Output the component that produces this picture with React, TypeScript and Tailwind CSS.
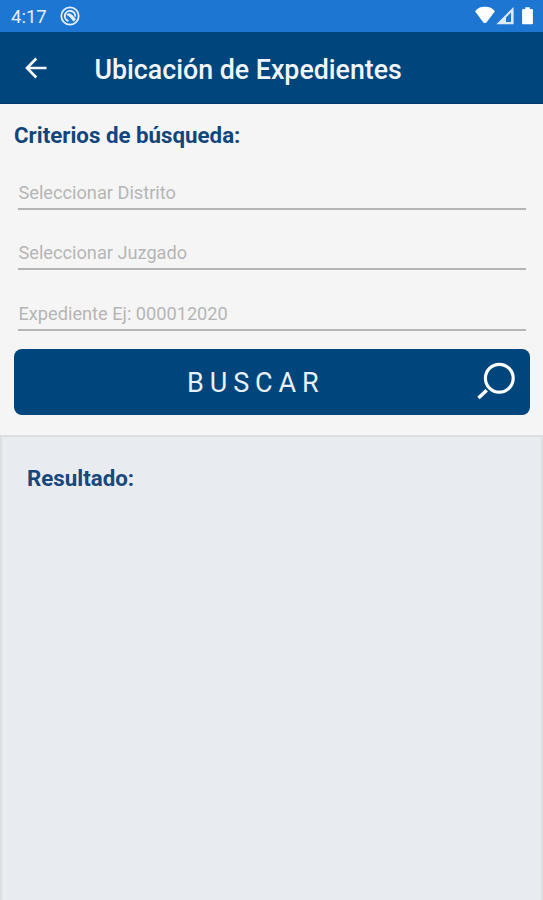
const StatusBar = () => {
  return (
    <div className="flex h-8 items-center justify-between bg-[#1e76d3] pl-[11px] pr-[8px] text-white">
      <div className="flex items-center gap-[13px]">
        <span className="pt-px text-[18.5px] leading-8 text-[#e6effb]">4:17</span>
        <svg width="20" height="20" viewBox="0 0 20 20" fill="none" stroke="#e6effb">
          <circle cx="10" cy="10" r="8.7" strokeWidth="1.8" />
          <path d="M8.4 15A5.2 5.2 0 1 1 15.2 10.6" strokeWidth="1.9" />
          <path d="M6.8 8.4c2.6-1.4 5-.2 8.6 4.8l-1.8 2c-2.2-3.2-3.8-4.8-6.8-6.8Z" fill="#e6effb" />
        </svg>
      </div>
      <svg width="60" height="20" viewBox="0 0 60 20" fill="white">
        {/* wifi */}
        <path d="M.2 5.4C2 2 6 .8 9.9.8s8 1.2 9.9 4.6L11.6 16.2q-1.7 1.7-3.4 0Z" />
        {/* signal */}
        <path fillRule="evenodd" d="M21.4 18.2 38.6 1v17.2ZM31 15.9h5V6.6l-5 5Z" fillOpacity=".85" />
        {/* battery */}
        <path d="M50.3 3V1.2h4.4V3h2.2a1 1 0 0 1 1 1v13.2a1 1 0 0 1-1 1h-8.8a1 1 0 0 1-1-1V4a1 1 0 0 1 1-1Z" />
      </svg>
    </div>
  );
};

const Header = () => {
  return (
    <header className="flex h-[72px] items-center border-b border-[#003368] bg-[#00457c] text-[#f1f5fa]">
      <button className="ml-[25px] mr-[47.5px] pt-px" aria-label="Volver">
        <svg width="22" height="22" viewBox="0 0 22 22" fill="none" stroke="currentColor" strokeWidth="2.7">
          <path d="M21.5 11H2.5M11.3 1.5 2 11l9.3 9.5" />
        </svg>
      </button>
      <h1 className="pt-[4px] text-[26.75px] font-medium leading-8">Ubicación de Expedientes</h1>
    </header>
  );
};

const Field = ({ placeholder }: { placeholder: string }) => {
  return (
    <div className="mx-[4px] flex h-[60.5px] items-end border-b-2 border-[#b5b5b5] pb-[3px]">
      <span className="pl-[0.5px] text-[18.2px] leading-6 text-[#b5b5b5]">{placeholder}</span>
    </div>
  );
};

export default function App() {
  return (
    <div className="flex h-[900px] w-[543px] flex-col overflow-hidden bg-[#f5f5f5] font-['Roboto',sans-serif]">
      <StatusBar />
      <Header />

      <section className="h-[331px] pl-[14px] pr-[13px] pt-[17px]">
        <h2 className="h-7 text-[22.3px] font-bold leading-7 text-[#11467c]">Criterios de búsqueda:</h2>
        <div className="mb-[18px]">
          <Field placeholder="Seleccionar Distrito" />
          <Field placeholder="Seleccionar Juzgado" />
          <Field placeholder="Expediente Ej: 000012020" />
        </div>
        <button className="flex h-[66px] w-full items-center rounded-[8px] bg-[#00457c] pl-[173px] pr-[15px] text-[#e9f0f7]">
          <span className="pt-[2px] text-[27px] leading-8 tracking-[5.9px]">BUSCAR</span>
          <svg className="ml-auto overflow-visible" width="38" height="38" viewBox="0 0 38 38" fill="none" stroke="white" strokeWidth="3.2">
            <circle cx="22.3" cy="15.2" r="13.9" />
            <path d="M9.7 27.2 1.5 35" strokeWidth="3.5" />
          </svg>
        </button>
      </section>

      <section className="flex-1 border-x-2 border-t-2 border-[#dadfe2] bg-[#e8ecf1] pl-[25px] pt-[27px]">
        <h2 className="text-[22.3px] font-bold leading-7 text-[#17477c]">Resultado:</h2>
      </section>
    </div>
  );
}
